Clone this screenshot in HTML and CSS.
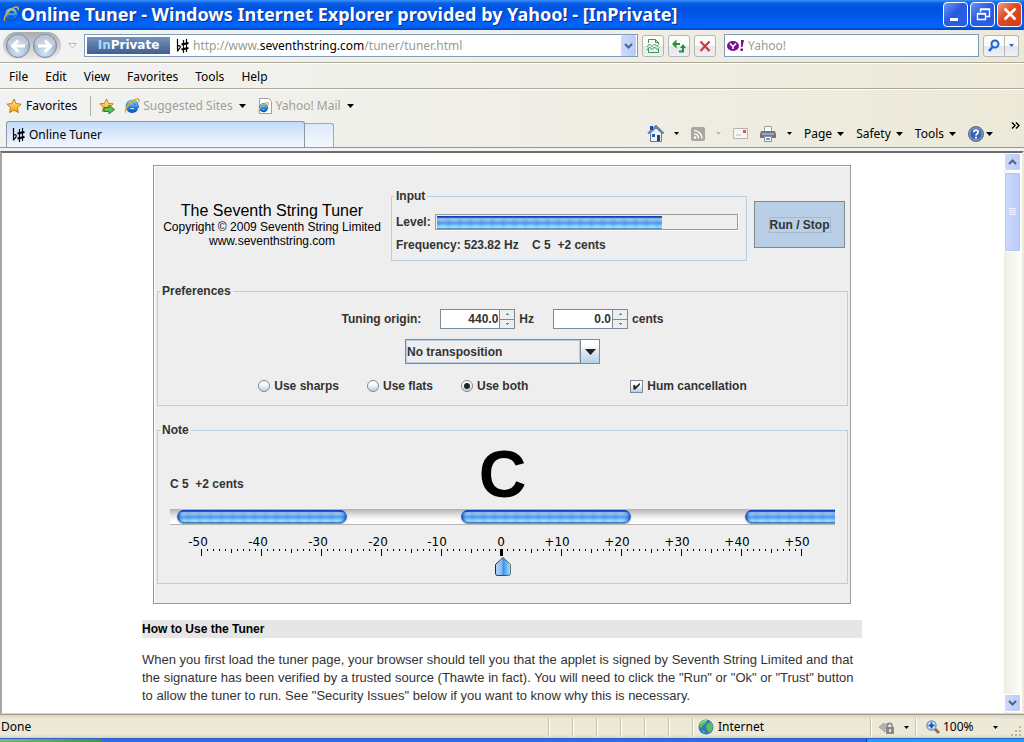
FILE: index.html
```html
<!DOCTYPE html>
<html lang="en">
<head>
<meta charset="utf-8">
<title>Online Tuner</title>
<link rel="stylesheet" href="styles.css">
</head>
<body>
<svg class="defs" width="0" height="0" aria-hidden="true">
  <defs>
    <linearGradient id="ie-g" x1="0" y1="0" x2="0" y2="1"><stop offset="0" stop-color="#6fd0ff"/><stop offset="1" stop-color="#0a62c8"/></linearGradient>
    <linearGradient id="star-g" x1="0" y1="0" x2="0" y2="1"><stop offset="0" stop-color="#fff09a"/><stop offset="1" stop-color="#f79a10"/></linearGradient>
    <radialGradient id="nav-g" cx=".5" cy=".75" r=".7"><stop offset="0" stop-color="#d5e8f5"/><stop offset="1" stop-color="#8fa3bd"/></radialGradient>
    <linearGradient id="ptr-g"><stop offset="0" stop-color="#b4d4f4"/><stop offset=".4" stop-color="#8abcf0"/><stop offset=".5" stop-color="#3f8fe4"/><stop offset="1" stop-color="#9fe6ff"/></linearGradient>
    <linearGradient id="ptr-s"><stop offset="0" stop-color="#1018a0"/><stop offset=".5" stop-color="#35507e"/><stop offset="1" stop-color="#5f7078"/></linearGradient>
    <symbol id="ie" viewBox="0 0 16 16">
      <path d="M12.6 10.2A4.8 4.8 0 1 1 13 8.3H4.6" fill="none" stroke="#0c55ad" stroke-width="3.6"/>
      <path d="M12.5 10.3A4.8 4.8 0 1 1 13 8.3H4.6" fill="none" stroke="url(#ie-g)" stroke-width="2.6"/>
      <path d="M1.7 14.6C-.2 11 7 2.6 12.4 1.1c3-.8 3.2 1.4 2.3 3.1" fill="none" stroke="#eda81c" stroke-width="1.5"/>
    </symbol>
    <symbol id="star" viewBox="0 0 16 16">
      <path d="M8 1l2.1 4.6 5 .6-3.7 3.4 1 5L8 12.1l-4.4 2.5 1-5L.9 6.200l5-.6z" fill="url(#star-g)" stroke="#c47a0c"/>
    </symbol>
    <symbol id="flatsharp" viewBox="0 0 13 16">
      <path d="M1.500 1v12.500M1.500 8.500c1.500-2 3.500-.5 2.500 1.500L1.500 13M7.500 2v13M10.500 1v13" fill="none" stroke="#000" stroke-width="1.200"/>
      <path d="M5.500 6.500l7-1.500M5.500 11.500l7-1.500" fill="none" stroke="#000" stroke-width="2"/>
    </symbol>
    <symbol id="caret" viewBox="0 0 7 4"><path d="M0 0h7L3.500 4z" fill="currentColor"/></symbol>
    <symbol id="chev-up" viewBox="0 0 9 6"><path d="M1 5l3.500-3.500L8 5" fill="none" stroke="#4d6185" stroke-width="2"/></symbol>
    <symbol id="chev-down" viewBox="0 0 9 6"><path d="M1 1l3.500 3.500L8 1" fill="none" stroke="#4d6185" stroke-width="2"/></symbol>
  </defs>
</svg>

<header class="titlebar">
  <svg class="i16"><use href="#ie"/></svg>
  <h1 class="titletext">Online Tuner - Windows Internet Explorer provided by Yahoo! - [InPrivate]</h1>
  <div class="winbtns">
    <button class="winbtn" aria-label="Minimize"><svg width="20" height="20"><path d="M4 14h8v3H4z" fill="#fff"/></svg></button>
    <button class="winbtn" aria-label="Restore"><svg width="20" height="20" fill="none" stroke="#fff"><path d="M7.500 8V5.500h9v7H13M7 5h10M4.500 9.500h8v6h-8zM4 10h9" stroke-width="1.400"/></svg></button>
    <button class="winbtn close" aria-label="Close"><svg width="20" height="20"><path d="M4.500 4.500l11 11m0-11l-11 11" stroke="#fff" stroke-width="2.600"/></svg></button>
  </div>
</header>

<div class="chrome">
  <div class="addressrow">
    <div class="navpod">
      <button class="navbtn" aria-label="Back"><svg width="26" height="26"><circle cx="13" cy="13" r="11.500" fill="url(#nav-g)" stroke="#7c8797"/><path d="M2.500 12a10.500 10.500 0 0 1 21 0q-10 2-21 0" fill="#fff" opacity=".35"/><path d="M20 13H8M13 7.500L7.500 13l5.500 5.500" fill="none" stroke="#fff" stroke-width="3"/></svg></button>
      <button class="navbtn" aria-label="Forward"><svg width="26" height="26"><circle cx="13" cy="13" r="11.500" fill="url(#nav-g)" stroke="#7c8797"/><path d="M2.500 12a10.500 10.500 0 0 1 21 0q-10 2-21 0" fill="#fff" opacity=".35"/><path d="M6 13h12M13 7.500l5.500 5.500-5.500 5.500" fill="none" stroke="#fff" stroke-width="3"/></svg></button>
    </div>
    <button class="plain history" aria-label="Recent pages"><svg width="9" height="6"><path d="M.8.500h7.400L4.500 5z" fill="#fff" stroke="#b5b5b5"/></svg></button>
    <div class="address">
      <span class="badge"><span class="badge-in">In</span>Private</span>
      <svg class="fs"><use href="#flatsharp"/></svg>
      <a class="url" href="#">http://www.<span class="host">seventhstring.com</span>/tuner/tuner.html</a>
      <button class="combo-arrow" aria-label="Address list"><svg width="9" height="6"><use href="#chev-down"/></svg></button>
    </div>
    <button class="tool" aria-label="Compatibility view"><svg width="14" height="16" fill="none" stroke="#39964a"><path d="M2.500 5V1.500h7l3 3V6M2.500 11v3.500h10V11M9.500 1.500v3h3"/><path d="M1 9l2.500-3L6 8.500 8.500 6 11 8.500 13 6.500M1 12l2.500-3L6 11.500 8.500 9l2.500 2.500L13 9.500"/></svg></button>
    <button class="tool" aria-label="Refresh"><svg width="16" height="16" fill="#229335"><path d="M1 6l4.500-4.500V5H9v2H5.500v3.500zM15 10l-3-4-3 4h2v2.500H8v2h5V10z"/></svg></button>
    <button class="tool" aria-label="Stop"><svg width="14" height="14"><path d="M2.500 2.500l9 9.500m0-9.500l-9 9.500" stroke="#c93a3f" stroke-width="2.200"/></svg></button>
    <label class="search">
      <svg class="yicon" width="18" height="12"><ellipse cx="6" cy="6" rx="6" ry="5" fill="#7b0f91"/><path d="M3 3.500l3 3 3-3M6 6v3" stroke="#fff" stroke-width="1.600" fill="none"/><path d="M14 0h3l-1.500 7H14zM13.500 8.500h2.500V11h-2.500z" fill="#7b0f91"/></svg>
      <input class="searchinput" type="text" placeholder="Yahoo!" aria-label="Search Yahoo!">
    </label>
    <div class="searchbtns">
      <button class="tool sgo" aria-label="Search"><svg width="14" height="14"><circle cx="8" cy="5" r="3.500" fill="#dceeff" stroke="#1b62d6" stroke-width="2"/><path d="M5.500 8L2 12" stroke="#1b62d6" stroke-width="2.500"/></svg></button>
      <button class="tool sdd" aria-label="Search options"><svg class="blue" width="5" height="3"><use href="#caret"/></svg></button>
    </div>
  </div>

  <nav class="menurow">
    <button class="plain">File</button><button class="plain">Edit</button><button class="plain">View</button><button class="plain">Favorites</button><button class="plain">Tools</button><button class="plain">Help</button>
  </nav>

  <div class="favrow">
    <button class="plain fav"><svg class="i16"><use href="#star"/></svg>Favorites</button>
    <span class="vsep"></span>
    <button class="plain" aria-label="Add to favorites bar"><svg class="i16" viewBox="0 0 16 16"><use href="#star" width="15" height="15"/><path d="M5 9.500h5V7l5.500 4.500L10 16v-2.500H5z" fill="#5cc04a" stroke="#23802c"/></svg></button>
    <a class="plain favlink" href="#"><svg class="i16"><use href="#ie"/></svg>Suggested Sites<svg class="car"><use href="#caret"/></svg></a>
    <a class="plain favlink" href="#"><svg class="i16" viewBox="0 0 16 16"><path d="M2.500.500h9l3 3v12h-12z" fill="#fff" stroke="#9aa0a8"/><use href="#ie" x="1" y="4" width="11" height="11"/></svg>Yahoo! Mail<svg class="car"><use href="#caret"/></svg></a>
  </div>

  <div class="tabrow">
    <button class="tab"><svg class="fs"><use href="#flatsharp"/></svg>Online Tuner</button>
    <button class="newtab" aria-label="New tab"></button>
    <div class="cmdbar">
      <button class="plain pair" aria-label="Home"><svg width="17" height="17"><path d="M3.500 8v8.500h11V8L9 3z" fill="#eef3fb" stroke="#66788f"/><path d="M1 8.500L9 1l7.500 7.500" fill="none" stroke="#6580a8" stroke-width="2"/><path d="M3 1h3v4H3z" fill="#2243c2"/><path d="M5 9h3v3H5z" fill="#2b54b8"/><path d="M10 10h3v6h-3z" fill="#2b3f78"/></svg><svg class="carsm"><use href="#caret"/></svg></button>
      <button class="plain pair" aria-label="Feeds"><svg width="15" height="14"><rect width="14" height="14" rx="2" fill="#a8a69e"/><path d="M3 7a4 4 0 0 1 4.500 4.500M3 3.500a8 8 0 0 1 8 8" fill="none" stroke="#f5f5f2" stroke-width="1.600"/><circle cx="4" cy="10.500" r="1.300" fill="#fff"/></svg><svg class="carsm dim"><use href="#caret"/></svg></button>
      <button class="plain" aria-label="Read mail"><svg width="15" height="11"><path d="M.5.500h14v10H.5z" fill="#f6f6f6" stroke="#b4b4b8"/><path d="M10 2h3v3h-3z" fill="#e0504c"/><path d="M3 7h5" stroke="#bbb"/></svg></button>
      <button class="plain pair" aria-label="Print"><svg width="17" height="16"><path d="M4.500.500h7v5h-7z" fill="#fff" stroke="#a0a0a0"/><path d="M1 5h14l1 3v4H0V8z" fill="#74777d"/><path d="M2 8h12" stroke="#d0d2d5"/><path d="M4.500 10.500h7v5h-7z" fill="#f5faff" stroke="#8b9098"/><path d="M6 13h4" stroke="#2db5d0" stroke-width="2"/></svg><svg class="carsm"><use href="#caret"/></svg></button>
      <button class="plain cmd">Page<svg class="car"><use href="#caret"/></svg></button>
      <button class="plain cmd">Safety<svg class="car"><use href="#caret"/></svg></button>
      <button class="plain cmd">Tools<svg class="car"><use href="#caret"/></svg></button>
      <button class="plain cmd help" aria-label="Help"><svg width="16" height="16"><circle cx="8" cy="8" r="7.500" fill="#3c63ad" stroke="#5a6d90"/><circle cx="8" cy="8" r="6.200" fill="none" stroke="#9bb4df"/><path d="M5.800 6.200c0-3 4.700-2.600 4.400 0C10 7.700 8 7.600 8 9.600M8 10.800v2" fill="none" stroke="#fff" stroke-width="1.800"/></svg><svg class="car"><use href="#caret"/></svg></button>
      <button class="plain more" aria-label="More"><svg width="9" height="7"><path d="M1 .5l3 3-3 3M5 .5l3 3-3 3" fill="none" stroke="#000" stroke-width="1.400"/></svg></button>
    </div>
  </div>
</div>

<div class="viewport">
  <main class="page">
    <form class="applet">
      <div class="top">
        <div class="about">
          <h2 class="about-title">The Seventh String Tuner</h2>
          <p class="about-line">Copyright © 2009 Seventh String Limited</p>
          <p class="about-line">www.seventhstring.com</p>
        </div>
        <fieldset class="group input">
          <legend>Input</legend>
          <div class="level"><span id="lvl">Level:</span><div class="meter" role="meter" aria-labelledby="lvl" aria-valuenow="75"><div class="meterfill aqua" style="width:75.4%"></div></div></div>
          <div class="freq">Frequency: 523.82 Hz &nbsp;&nbsp; C 5 &nbsp;+2 cents</div>
        </fieldset>
        <button class="run" type="button"><span class="focus">Run / Stop</span></button>
      </div>

      <fieldset class="group prefs">
        <legend>Preferences</legend>
        <div class="origin">
          <label for="hz">Tuning origin:</label>
          <div class="unit">
            <div class="spinner"><input id="hz" class="spintext" type="text" value="440.0"><div class="steps"><button class="step" type="button" aria-label="Raise frequency"><svg width="3" height="2"><path d="M1 0h1v1h1v1H0V1h1z" fill="#6e8296"/></svg></button><button class="step" type="button" aria-label="Lower frequency"><svg width="3" height="2"><path d="M0 0h3v1H2v1H1V1H0z" fill="#6e8296"/></svg></button></div></div>
            <label for="hz">Hz</label>
          </div>
          <div class="unit">
            <div class="spinner"><input id="cents" class="spintext" type="text" value="0.0"><div class="steps"><button class="step" type="button" aria-label="Raise cents"><svg width="3" height="2"><path d="M1 0h1v1h1v1H0V1h1z" fill="#6e8296"/></svg></button><button class="step" type="button" aria-label="Lower cents"><svg width="3" height="2"><path d="M0 0h3v1H2v1H1V1H0z" fill="#6e8296"/></svg></button></div></div>
            <label for="cents">cents</label>
          </div>
        </div>
        <div class="selectwrap">
          <select class="transpose" aria-label="Transposition"><option>No transposition</option></select>
          <span class="selectarrow"><svg width="11" height="6" viewBox="0 0 11 6"><path d="M0 0h11L5.500 6z" fill="#222"/></svg></span>
        </div>
        <div class="choices">
          <label class="choice"><input type="radio" name="acc">Use sharps</label>
          <label class="choice"><input type="radio" name="acc">Use flats</label>
          <label class="choice"><input type="radio" name="acc" checked>Use both</label>
          <label class="choice hum"><input type="checkbox" checked>Hum cancellation</label>
        </div>
      </fieldset>

      <fieldset class="group note">
        <legend>Note</legend>
        <div class="noterow">
          <span class="notetext">C 5 &nbsp;+2 cents</span>
          <span class="bignote">C</span>
        </div>
        <div class="strip"><div class="pill aqua"></div><div class="pill aqua"></div><div class="pill aqua"></div></div>
        <svg class="ruler" viewBox="0 0 665 46" role="img" aria-label="Cents scale">
          <defs>
            <pattern id="tick1" x="31" y="0" width="6" height="46" patternUnits="userSpaceOnUse"><path d="M0 24h1v2H0z"/></pattern>
            <pattern id="tick5" x="31" y="0" width="30" height="46" patternUnits="userSpaceOnUse"><path d="M0 24h1v4H0z"/></pattern>
            <pattern id="tick10" x="31" y="0" width="60" height="46" patternUnits="userSpaceOnUse"><path d="M0 24h1v7H0z"/></pattern>
          </defs>
          <g text-anchor="middle">
            <text x="28" y="21">-50</text><text x="88" y="21">-40</text><text x="148" y="21">-30</text><text x="208" y="21">-20</text><text x="267" y="21">-10</text><text x="331" y="21">0</text><text x="387" y="21">+10</text><text x="447" y="21">+20</text><text x="507" y="21">+30</text><text x="567" y="21">+40</text><text x="627" y="21">+50</text>
          </g>
          <path d="M31 20h601v20H31z" fill="url(#tick1)"/>
          <path d="M31 22h601v10H31z" fill="url(#tick5)"/>
          <path d="M31 22h601v10H31z" fill="url(#tick10)"/>
          <path d="M330 24h3v7h-3z"/>
          <path d="M325.500 39.500L333 32.500l7.500 7v9q0 2-2 2h-11q-2 0-2-2z" fill="url(#ptr-g)" stroke="url(#ptr-s)"/>
        </svg>
      </fieldset>
    </form>

    <h2 class="heading">How to Use the Tuner</h2>
    <p class="para">When you first load the tuner page, your browser should tell you that the applet is signed by Seventh String Limited and that the signature has been verified by a trusted source (Thawte in fact). You will need to click the "Run" or "Ok" or "Trust" button to allow the tuner to run. See "Security Issues" below if you want to know why this is necessary.</p>
  </main>
  <div class="scrollbar">
    <button class="sbtn" aria-label="Scroll up"><svg width="9" height="6"><use href="#chev-up"/></svg></button>
    <div class="thumb"><svg width="7" height="8"><path d="M0 .5h7M0 2.500h7M0 4.500h7M0 6.500h7" stroke="#eef4fe"/></svg></div>
    <div class="sspace"></div>
    <button class="sbtn" aria-label="Scroll down"><svg width="9" height="6"><use href="#chev-down"/></svg></button>
  </div>
</div>

<footer class="status">
  <span class="done">Done</span>
  <span class="cell"></span><span class="cell"></span><span class="cell"></span><span class="cell"></span><span class="cell"></span><span class="cell"></span>
  <span class="zone"><svg width="16" height="16"><circle cx="8" cy="8" r="7.500" fill="#2d77c9"/><path d="M3 2.500Q7 0 9 2L7 5 5 6.500 3 9 1 7zM9 5l4-2 2 4-1 4-3 3-2-3-1-3zM4 11l3 1-1 3z" fill="#63c04c"/><path d="M2.500 5Q5 1 9 1.500" fill="none" stroke="#cfe9ff" opacity=".7"/></svg>Internet</span>
  <span class="protected"><svg width="16" height="16"><path d="M0 8l5-4v2.500q3-3 6-2-4 2-5 6V13z" fill="#b5b5b0" stroke="#8b8b88" stroke-width=".6"/><path d="M8.500 8V6.500a2.200 2.200 0 0 1 4.500 0V8" fill="none" stroke="#85898c" stroke-width="1.500"/><path d="M7 8h8v7H7z" fill="#85898c"/><path d="M11 10v3" stroke="#fff" stroke-width="1.500"/></svg><svg class="carsm"><use href="#caret"/></svg></span>
  <span class="zoom"><svg width="15" height="15"><path d="M8 8l5 5" stroke="#9a6a4a" stroke-width="3"/><circle cx="5.500" cy="5.500" r="4.500" fill="#eaf5ff" stroke="#6c9bd6" stroke-width="1.500"/><path d="M5.500 2.500v6M2.500 5.500h6" stroke="#174fb3" stroke-width="2"/></svg><span class="pct">100%</span><svg class="carsm"><use href="#caret"/></svg></span>
  <svg class="grip" width="12" height="12" fill="#b8b4a2"><path d="M9 1h2v2H9zM9 5h2v2H9zM9 9h2v2H9zM5 5h2v2H5zM5 9h2v2H5zM1 9h2v2H1z"/></svg>
</footer>
<div class="taskbar"><div class="start"></div><div class="tasks"></div><div class="tray"></div></div>
</body>
</html>
```
FILE: styles.css
```css
* { box-sizing: border-box; }
html, body { height: 100%; }
body {
  margin: 0;
  display: flex;
  flex-direction: column;
  overflow: hidden;
  background: #fff;
  color: #000;
  font: 12px/16px "Noto Sans", sans-serif;
}
button, input, select { font: inherit; color: inherit; margin: 0; }
button { padding: 0; }
a { color: inherit; text-decoration: none; }
svg { display: block; flex: none; }
.defs { position: absolute; }
.plain { border: 0; background: none; display: flex; align-items: center; white-space: nowrap; }
.i16 { width: 16px; height: 16px; }
.fs { width: 13px; height: 16px; }
.car { width: 7px; height: 4px; }
.carsm { width: 5px; height: 3px; }
.dim { color: #c0beb4; }
.blue { color: #1b62d6; }

/* Title bar */
.titlebar {
  display: flex;
  align-items: center;
  flex: none;
  height: 30px;
  padding: 0 2px 2px 3px;
  gap: 2px;
  background: linear-gradient(#3c93fb 0, #0b60e8 3px, #0053e0 8px, #0058ec 16px, #0065fd 24px, #0060f5 27px, #0044c4 30px);
}
.titletext {
  flex: 1;
  margin: 0;
  font: bold 18px/24px "Noto Sans", sans-serif;
  color: #fff;
  text-shadow: 1px 1px 0 #0a2a8c;
  white-space: nowrap;
}
.winbtns { display: flex; gap: 2px; }
.winbtn {
  display: flex;
  align-items: center;
  justify-content: center;
  width: 25px;
  height: 25px;
  border: 1px solid #fff;
  border-radius: 4px;
  background: linear-gradient(135deg, #6d97f2, #2a5be0 45%, #2360e8);
}
.winbtn.close { background: linear-gradient(135deg, #f09a80, #dd4a22 45%, #d03c10); }

/* Toolbars */
.chrome { flex: none; background: linear-gradient(90deg, #f1f3f3, #efede2 70%, #ece9d8); }
.addressrow {
  display: flex;
  align-items: center;
  height: 33px;
  padding: 0 5px 1px 3px;
  gap: 4px;
  border-bottom: 1px solid #aca899;
}
.navpod { display: flex; padding: 0 2px; border-radius: 14px; background: linear-gradient(#a9acb0, #e8e9ea); }
.navbtn { width: 27px; height: 27px; border: 0; background: none; }
.history { width: 15px; justify-content: center; }
.address, .search { display: flex; align-items: center; height: 23px; border: 1px solid #7f9db9; background: #fff; }
.address { flex: 1; padding: 0 1px 0 2px; }
.badge {
  width: 83px;
  margin-right: 6px;
  background: linear-gradient(#7593bb, #3d5f92);
  color: #fff;
  font: bold 12px/17px "DejaVu Sans", sans-serif;
  text-align: center;
}
.badge-in { color: #a9dcff; }
.url { flex: 1; margin-left: 4px; color: #9a9a90; font-size: 12px; }
.host { color: #000; }
.combo-arrow, .sbtn, .thumb {
  display: flex;
  align-items: center;
  justify-content: center;
  border: 1px solid #fff;
  border-radius: 2px;
  background: linear-gradient(90deg, #cbdafd, #b9cbf8);
}
.combo-arrow { width: 15px; height: 21px; border: 0; }
.tool {
  display: flex;
  align-items: center;
  justify-content: center;
  width: 22px;
  height: 22px;
  border: 1px solid #b4b6b8;
  border-radius: 3px;
  background: linear-gradient(#fbfbfa 50%, #e2e5ea 50%, #eff1f3);
}
.search { width: 255px; margin-left: 4px; padding-left: 2px; gap: 3px; }
.searchinput { flex: 1; min-width: 0; border: 0; padding: 0; background: none; outline: 0; }
.searchinput::placeholder { color: #9a9a90; opacity: 1; }
.searchbtns { display: flex; }
.sgo { border-radius: 3px 0 0 3px; }
.sdd { width: 14px; border-left: 0; border-radius: 0 3px 3px 0; }
.menurow { display: flex; align-items: center; height: 26px; padding: 1px 9px 0; gap: 17px; border-top: 1px solid #fff; border-bottom: 1px solid #aca899; }
.favrow { display: flex; align-items: center; height: 32px; padding: 0 6px; gap: 9px; border-top: 1px solid #fff; }
.fav { gap: 4px; margin-right: 4px; }
.vsep { width: 1px; height: 20px; background: #b4b1a4; margin-right: -1px; }
.favlink { color: #a19f94; gap: 3px; }
.favlink .car { color: #000; margin: 0 2px 0 3px; }
.tabrow { display: flex; align-items: flex-end; height: 27px; padding: 0 4px 0 6px; border-bottom: 1px solid #8e979f; }
.tab {
  display: flex;
  align-items: center;
  gap: 4px;
  width: 299px;
  height: 26px;
  padding: 0 5px;
  border: 1px solid #8e979f;
  border-bottom: 0;
  border-radius: 3px 3px 0 0;
  background: linear-gradient(#c3dbf9, #f3f8fe);
}
.newtab { width: 29px; height: 24px; border: 1px solid #a0a8b0; border-left: 0; border-bottom: 0; border-radius: 0 3px 0 0; background: linear-gradient(#dce9fa, #f4f8fd); }
.cmdbar { display: flex; flex: 1; align-items: center; justify-content: flex-end; height: 27px; gap: 12px; }
.pair { gap: 10px; }
.cmd { gap: 5px; }
.help { gap: 2px; }
.more { align-self: flex-start; margin: 2px 0 0 6px; }

/* Document area */
.viewport {
  display: flex;
  flex: 1;
  min-height: 0;
  margin-top: 3px;
  border: 1px solid #716f64;
  border-width: 2px 2px 1px 2px;
  border-color: #716f64 #ece9d8 #d8d5c8 #a8a69a;
  box-shadow: 0 -3px 0 #f0f2f8;
}
.page { flex: 1; min-width: 0; overflow: hidden; padding: 12px 0; font-family: "Liberation Sans", Arial, sans-serif; }
.applet {
  width: 698px;
  margin: 0 auto;
  padding: 22px 2px 19px 3px;
  border: 1px solid #9a9a9a;
  box-shadow: inset 1px 1px 0 #fff;
  background: #eee;
  color: #333;
  font-weight: bold;
}
.top { display: flex; align-items: center; margin-bottom: 22px; }
.about { flex: 1; padding-right: 4px; text-align: center; color: #000; font-weight: normal; }
.about-title { margin: 0; font: 16px/18px "Liberation Sans", Arial, sans-serif; }
.about-line { margin: 0; font-size: 12px; line-height: 14px; white-space: nowrap; }
.group { min-width: 0; margin: 0; border: 1px solid #b8cfe5; }
.group legend { padding: 0 2px; line-height: 16px; }
.input { width: 356px; padding: 10px 8px 7px 4px; }
.input legend { margin-left: -2px; }
.level { display: flex; align-items: center; gap: 4px; margin-bottom: 7px; }
.meter { flex: 1; height: 16px; padding: 1px; border: 1px solid #9a9a9a; box-shadow: 1px 1px 0 #fff; }
.meterfill { height: 13px; }
.freq { white-space: pre; }
.aqua {
  background:
    repeating-linear-gradient(90deg, rgba(40,110,215,.14) 0 1px, transparent 4px 8px, rgba(40,110,215,.14) 11px),
    linear-gradient(#0a3bb5 0, #1446bd 10%, #9cc4f0 20%, #86b6ec 40%, #5199e7 52%, #6cb6f4 66%, #a2eaff 86%, #8fd0f0 92%, #35618f 100%);
}
.run { width: 91px; height: 47px; margin: 0 3px 0 7px; border: 1px solid #7a8a99; background: #b8cfe5; font-weight: bold; }
.focus { border: 1px solid #a3b8cc; }

.prefs { padding: 10px 0 11px; margin-bottom: 16px; }
.prefs legend { margin-left: 2px; }
.origin { display: flex; justify-content: center; align-items: center; gap: 19px; }
.unit { display: flex; align-items: center; gap: 4px; }
.spinner { display: flex; width: 75px; height: 20px; border: 1px solid #7a8a99; background: #fff; }
.spintext { flex: 1; min-width: 0; border: 0; padding: 0 1px; background: #fff; text-align: right; font-weight: bold; outline: 0; }
.steps { display: flex; flex-direction: column; width: 15px; border-left: 1px solid #7a8a99; background: #eee; }
.step { flex: 1; display: flex; align-items: center; justify-content: center; border: 0; background: none; }
.step + .step { border-top: 1px solid #7a8a99; }
.selectwrap { display: flex; width: 195px; margin: 10px auto 14px; border: 1px solid #7a8a99; }
.transpose { flex: 1; min-width: 0; height: 23px; padding: 0; appearance: none; border: 1px solid #b8cfe5; border-radius: 0; background: #eee; font-weight: bold; }
.selectarrow { display: flex; align-items: center; justify-content: center; width: 19px; border-left: 1px solid #7a8a99; background: linear-gradient(#fff 20%, #dce8f3 50%, #b8cfe5); }
.choices { display: flex; justify-content: center; gap: 28px; }
.choice { display: flex; align-items: center; gap: 4px; white-space: nowrap; }
.hum { margin-left: 74px; }
.choice input {
  appearance: none;
  display: grid;
  place-items: center;
  width: 12px;
  height: 12px;
  border: 1px solid #7a8a99;
  background: linear-gradient(#fff 30%, #b8cfe5);
}
.choice input[type="radio"] { border-radius: 50%; }
.choice input[type="radio"]:checked::before { content: ""; width: 6px; height: 6px; border-radius: 50%; background: #222; }
.choice input[type="checkbox"] { width: 13px; height: 13px; }
.choice input[type="checkbox"]:checked::before { content: ""; width: 7px; height: 7px; background: #222; clip-path: polygon(0 35%, 25% 35%, 30% 60%, 100% 0, 100% 25%, 30% 100%, 0 100%); }

.note { padding: 0 12px 2px; }
.note legend { margin-left: -10px; }
.noterow { display: grid; grid-template-columns: 1fr auto 1fr; align-items: center; height: 71px; }
.notetext { padding-top: 20px; }
.bignote { font-size: 66px; line-height: 70px; color: #000; }
.strip {
  display: flex;
  gap: 114px;
  height: 16px;
  padding: 1px 0 1px 7px;
  overflow: hidden;
  border-bottom: 1px solid #b4b4b4;
  background: linear-gradient(#b0b0b0, #dcdcdc 35%, #f8f8f8 65%, #fff);
}
.pill { flex: none; width: 170px; height: 13px; border-radius: 7px; box-shadow: inset 3px 0 3px -1px #0a48c8, inset -3px 0 3px -1px #0a48c8, 0 1px 1px #888; }
.ruler { width: 100%; height: auto; overflow: visible; font: 12px "DejaVu Sans", sans-serif; fill: #000; margin-bottom: 10px; }

.heading { width: 720px; margin: 16px auto 13px; background: #e6e6e6; color: #000; font: bold 12px/18px "Liberation Sans", Arial, sans-serif; }
.para { width: 720px; margin: 0 auto; color: #333; font-size: 13px; line-height: 18px; }

.scrollbar { display: flex; flex-direction: column; width: 20px; padding: 0 1px 1px 2px; gap: 1px; background: linear-gradient(90deg, #fff 2px, #eeede5 2px, #fefefb); }
.sbtn { width: 17px; height: 18px; }
.thumb { width: 17px; height: 80px; box-shadow: 0 0 0 1px #b4c6ee inset; }
.sspace { flex: 1; }

/* Status bar */
.status { display: flex; align-items: center; flex: none; height: 24px; padding-top: 1px; border-top: 1px solid #9d9a8c; background: linear-gradient(#d9d6c6, #ece9d8 20%, #ece9d8 85%, #d8d4c0); }
.done { flex: 1; padding-left: 1px; }
.cell, .zone, .protected, .zoom { height: 19px; border-left: 1px solid #c5c2b2; box-shadow: inset 1px 0 0 #fff; }
.cell { width: 24px; }
.zone { display: flex; align-items: center; gap: 4px; width: 178px; padding-left: 5px; }
.protected { display: flex; align-items: center; gap: 9px; width: 45px; padding-left: 8px; }
.zoom { display: flex; align-items: center; gap: 2px; width: 95px; padding-left: 10px; }
.pct { flex: 1; }
.zoom .carsm { margin-right: 12px; }
.grip { align-self: flex-end; margin: 0 2px 1px 0; }
.taskbar { display: flex; flex: none; height: 4px; border-top: 1px solid #2a5fd0; }
.start { width: 101px; background: linear-gradient(90deg, #7cb878, #3c963c); }
.tasks { flex: 1; background: #2c6fe0; }
.tray { width: 158px; background: #18a4ee; border-left: 1px solid #0c3c90; }
```
